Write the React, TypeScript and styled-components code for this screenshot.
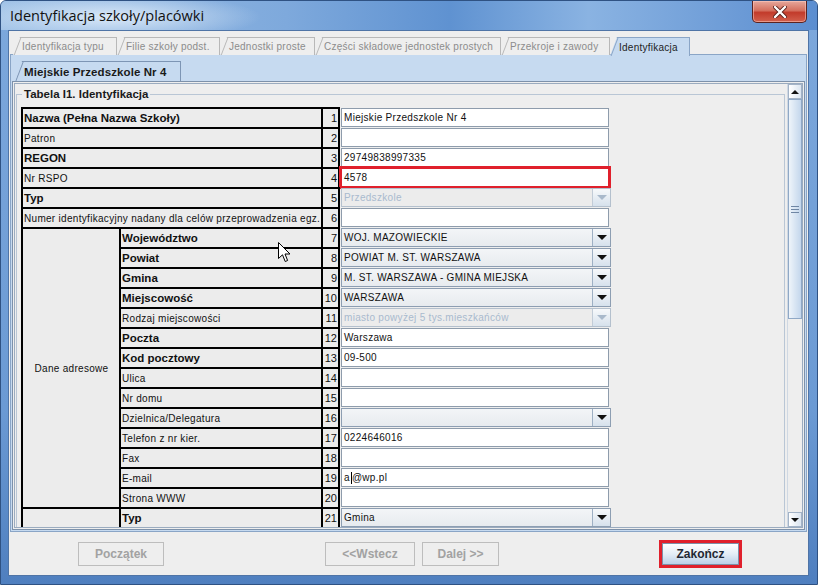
import styled, { createGlobalStyle } from 'styled-components';

const GlobalStyle = createGlobalStyle`
  html, body {
    margin: 0;
    padding: 0;
    background: #ffffff;
  }
  body {
    font-family: "Liberation Sans", Arial, sans-serif;
  }
  * {
    box-sizing: border-box;
  }
`;

const Frame = styled.div`
  width: 818px;
  height: 585px;
  display: flex;
  flex-direction: column;
  background: linear-gradient(180deg, #7da8dc 0%, #6b9ad4 70%, #4f7fbf 100%);
  border: 1px solid #2f5283;
  border-radius: 6px 6px 0 0;
  overflow: hidden;
`;

const TitleBar = styled.div`
  height: 29px;
  flex: none;
  display: flex;
  justify-content: space-between;
  background:
    radial-gradient(ellipse 150px 24px at 110px 16px, rgba(226, 238, 250, 0.9), rgba(226, 238, 250, 0) 100%),
    linear-gradient(90deg, #9dc0e6 0%, #7ea9dc 35%, #5f92d1 55%, #8ab3e2 72%, #5c8ed0 100%);
`;

const Title = styled.div`
  padding: 5px 0 0 9px;
  font-family: "Open Sans", "Noto Sans", sans-serif;
  font-size: 14.5px;
  color: #111;
`;

const CloseButton = styled.div`
  width: 55px;
  height: 22px;
  margin-right: 10px;
  display: flex;
  align-items: center;
  justify-content: center;
  border: 1px solid #5b2320;
  border-top: none;
  border-radius: 0 0 5px 5px;
  background: linear-gradient(180deg, #e6a89c 0%, #d4705f 45%, #c23b2b 55%, #d2604d 100%);
  box-shadow: inset 0 0 0 1px rgba(255, 210, 200, 0.5);
`;

const Client = styled.div`
  flex: 1;
  margin: 0 8px 8px 7px;
  display: flex;
  flex-direction: column;
  padding: 6px 1px 0 1px;
  background: #eeeeee;
  border: 1px solid #4f74a6;
`;

const TabStrip = styled.div`
  position: relative;
  z-index: 1;
  display: flex;
  height: 18px;
  margin: 0 0 -1px 3px;
  align-items: flex-start;
`;

const Tab = styled.div<{ $active?: boolean; $w?: number }>`
  position: relative;
  width: ${(p) => (p.$w ? p.$w + 'px' : 'auto')};
  height: ${(p) => (p.$active ? '19px' : '18px')};
  padding: 0 0 0 9px;
  flex: none;
  display: flex;
  align-items: center;
  font-size: 10px;
  letter-spacing: 0.25px;
  white-space: nowrap;
  color: ${(p) => (p.$active ? '#1e1e1e' : '#8c8c8c')};
  background: ${(p) => (p.$active ? '#c6daf0' : '#eeeeee')};
  border-top: 1px solid ${(p) => (p.$active ? '#8aa5c6' : '#b8b8b8')};
  border-right: 1px solid ${(p) => (p.$active ? '#8aa5c6' : '#b8b8b8')};
  clip-path: polygon(7px 0, 100% 0, 100% 100%, 0 100%);

  &::before {
    content: '';
    position: absolute;
    left: 4px;
    top: 0;
    width: 1px;
    height: 100%;
    background: ${(p) => (p.$active ? '#8aa5c6' : '#b8b8b8')};
    transform: skewX(-21deg);
  }
`;

const Pane = styled.div`
  height: 478px;
  flex: none;
  display: flex;
  flex-direction: column;
  padding: 6px 1px 1px 1px;
  background: #c6daf0;
  border: 1px solid #8aa5c6;
`;

const InnerTab = styled(Tab)`
  height: 20px;
  margin-left: 3px;
  padding: 0 14px 0 9px;
  align-self: flex-start;
  font-size: 11.5px;
  font-weight: bold;
  letter-spacing: 0.1px;
  color: #1a1a1a;
  border-color: #7d95b4;

  &::before {
    background: #7d95b4;
  }
`;

const InnerPanel = styled.div`
  height: 449px;
  flex: none;
  padding: 1px;
  background: #eeeeee;
  border: 1px solid #7d91aa;
`;

const Viewport = styled.div`
  height: 445px;
  display: flex;
  overflow: hidden;
  border: 1px solid #9aabbf;
`;

const Content = styled.div`
  flex: 1;
  overflow: hidden;
`;

const TitledBox = styled.fieldset`
  margin: 3px 2px 0 1px;
  padding: 6px 0 0 4px;
  min-width: 0;
  border: 1px solid #b9c6d5;
  border-bottom: none;

  legend {
    padding: 0 2px;
    margin-left: 1px;
    font-size: 11.5px;
    line-height: 14px;
    font-weight: bold;
    color: #1a1a1a;
  }
`;

const Grid = styled.div`
  position: relative;
  display: grid;
  grid-template-columns: 100px 202px 17px 269px;
  grid-template-rows: repeat(20, 20px) 22px;
`;

const LabelCell = styled.div<{
  $col: string;
  $row?: string;
  $left?: boolean;
  $last?: boolean;
  $bold?: boolean;
  $center?: boolean;
}>`
  grid-column: ${(p) => p.$col};
  grid-row: ${(p) => p.$row || 'auto'};
  display: flex;
  align-items: center;
  justify-content: ${(p) => (p.$center ? 'center' : 'flex-start')};
  padding-left: 1px;
  background: #ececec;
  border-top: 2px solid #000;
  border-right: 2px solid #000;
  border-left: ${(p) => (p.$left ? '2px solid #000' : 'none')};
  border-bottom: ${(p) => (p.$last ? '2px solid #000' : 'none')};
  font-size: ${(p) => (p.$bold ? '11.5px' : '10px')};
  font-weight: ${(p) => (p.$bold ? 'bold' : 'normal')};
  letter-spacing: ${(p) => (p.$bold ? '0' : '0.3px')};
  color: #111;
  white-space: nowrap;
  overflow: hidden;
`;

const NumCell = styled.div<{ $last?: boolean }>`
  grid-column: 3;
  display: flex;
  align-items: center;
  justify-content: flex-end;
  padding-right: 1px;
  background: #ececec;
  border-top: 2px solid #000;
  border-right: 2px solid #000;
  border-bottom: ${(p) => (p.$last ? '2px solid #000' : 'none')};
  font-size: 11px;
  color: #111;
`;

const FieldCell = styled.div`
  grid-column: 4;
  padding: 1px 0 0 1px;
`;

const TextBox = styled.div<{ $highlight?: boolean }>`
  width: 268px;
  height: 19px;
  display: flex;
  align-items: center;
  padding-left: 2px;
  background: #ffffff;
  border: 1px solid #8e9cac;
  font-size: 10px;
  letter-spacing: 0.3px;
  color: #111;
  outline: ${(p) => (p.$highlight ? '3px solid #e0202c' : 'none')};
  outline-offset: -1px;
`;

const Combo = styled.div<{ $disabled?: boolean }>`
  width: 270px;
  height: 19px;
  display: flex;
  background: ${(p) => (p.$disabled ? '#ececec' : 'linear-gradient(180deg, #f3f5f7, #e7ebef)')};
  border: 1px solid ${(p) => (p.$disabled ? '#b4c0cd' : '#8d9eb2')};
  font-size: 10px;
  letter-spacing: 0.3px;
  color: ${(p) => (p.$disabled ? '#a9bace' : '#111')};
`;

const ComboText = styled.div`
  flex: 1;
  display: flex;
  align-items: center;
  padding-left: 2px;
  white-space: nowrap;
  overflow: hidden;
`;

const ComboArrow = styled.div<{ $disabled?: boolean }>`
  width: 18px;
  display: flex;
  align-items: center;
  justify-content: center;
  border-left: 1px solid ${(p) => (p.$disabled ? '#c2ccd7' : '#9eb0c4')};
  background: linear-gradient(180deg, #f7f9fb, #d6e1ec);

  &::after {
    content: '';
    border-left: 5px solid transparent;
    border-right: 5px solid transparent;
    border-top: 5px solid ${(p) => (p.$disabled ? '#a9b9cb' : '#111')};
  }
`;

const Caret = styled.span`
  display: inline-block;
  width: 1px;
  height: 12px;
  margin: 0 0 0 1px;
  background: #000;
`;

const Cursor = styled.svg`
  position: absolute;
  left: 257px;
  top: 135px;
  pointer-events: none;
`;

const ScrollBar = styled.div`
  width: 15px;
  flex: none;
  display: flex;
  flex-direction: column;
  background: #eeeeee;
  border-left: 1px solid #cfd8e3;
`;

const ScrollButton = styled.div<{ $down?: boolean }>`
  height: 15px;
  flex: none;
  display: flex;
  align-items: center;
  justify-content: center;
  background: linear-gradient(90deg, #ffffff, #dbe5f0);
  border: 1px solid #a3b3c7;
  margin-top: ${(p) => (p.$down ? 'auto' : '0')};

  &::after {
    content: '';
    border-left: 4px solid transparent;
    border-right: 4px solid transparent;
    border-top: ${(p) => (p.$down ? '4px solid #111' : 'none')};
    border-bottom: ${(p) => (p.$down ? 'none' : '4px solid #111')};
  }
`;

const Thumb = styled.div`
  height: 220px;
  flex: none;
  display: flex;
  flex-direction: column;
  align-items: center;
  justify-content: center;
  gap: 2px;
  background: linear-gradient(90deg, #eef4fa, #c3d6ec);
  border: 1px solid #8fa8c6;

  span {
    width: 8px;
    height: 1px;
    background: #6f86a4;
  }
`;

const ButtonBar = styled.div`
  flex: 1;
  display: flex;
  align-items: center;
  padding-left: 68px;
`;

const Button = styled.div<{ $disabled?: boolean; $gap?: number; $w: number }>`
  width: ${(p) => p.$w}px;
  height: ${(p) => (p.$disabled ? '24px' : '22px')};
  margin-left: ${(p) => p.$gap || 0}px;
  display: flex;
  align-items: center;
  justify-content: center;
  white-space: nowrap;
  font-size: 12px;
  font-weight: bold;
  color: ${(p) => (p.$disabled ? '#a2a2a2' : '#1f2833')};
  background: ${(p) =>
    p.$disabled ? '#eeeeee' : 'linear-gradient(180deg, #ffffff 0%, #e4edf6 50%, #bcd0e8 100%)'};
  border: 1px solid ${(p) => (p.$disabled ? '#bdbdbd' : '#7d90a8')};
`;

const Highlight = styled.div<{ $gap?: number }>`
  margin-left: ${(p) => p.$gap || 0}px;
  border: 3px solid #e0202c;
`;

type Field =
  | { kind: 'text'; value?: string; highlight?: boolean; caret?: boolean }
  | { kind: 'combo'; value?: string; disabled?: boolean };

type Row = { label?: string; bold?: boolean; field: Field };

const topRows: Row[] = [
  { label: 'Nazwa (Pełna Nazwa Szkoły)', bold: true, field: { kind: 'text', value: 'Miejskie Przedszkole Nr 4' } },
  { label: 'Patron', field: { kind: 'text' } },
  { label: 'REGON', bold: true, field: { kind: 'text', value: '29749838997335' } },
  { label: 'Nr RSPO', field: { kind: 'text', value: '4578', highlight: true } },
  { label: 'Typ', bold: true, field: { kind: 'combo', value: 'Przedszkole', disabled: true } },
  { label: 'Numer identyfikacyjny nadany dla celów przeprowadzenia egz.', field: { kind: 'text' } },
];

const addressRows: Row[] = [
  { label: 'Województwo', bold: true, field: { kind: 'combo', value: 'WOJ. MAZOWIECKIE' } },
  { label: 'Powiat', bold: true, field: { kind: 'combo', value: 'POWIAT M. ST. WARSZAWA' } },
  { label: 'Gmina', bold: true, field: { kind: 'combo', value: 'M. ST. WARSZAWA - GMINA MIEJSKA' } },
  { label: 'Miejscowość', bold: true, field: { kind: 'combo', value: 'WARSZAWA' } },
  { label: 'Rodzaj miejscowości', field: { kind: 'combo', value: 'miasto powyżej 5 tys.mieszkańców', disabled: true } },
  { label: 'Poczta', bold: true, field: { kind: 'text', value: 'Warszawa' } },
  { label: 'Kod pocztowy', bold: true, field: { kind: 'text', value: '09-500' } },
  { label: 'Ulica', field: { kind: 'text' } },
  { label: 'Nr domu', field: { kind: 'text' } },
  { label: 'Dzielnica/Delegatura', field: { kind: 'combo' } },
  { label: 'Telefon z nr kier.', field: { kind: 'text', value: '0224646016' } },
  { label: 'Fax', field: { kind: 'text' } },
  { label: 'E-mail', field: { kind: 'text', value: 'a@wp.pl', caret: true } },
  { label: 'Strona WWW', field: { kind: 'text' } },
];

const tabs = [
  { title: 'Identyfikacja typu', w: 104 },
  { title: 'Filie szkoły podst.', w: 103 },
  { title: 'Jednostki proste', w: 95 },
  { title: 'Części składowe jednostek prostych', w: 186 },
  { title: 'Przekroje i zawody', w: 109 },
  { title: 'Identyfikacja', w: 80 },
];

const FieldView = ({ field }: { field: Field }) => {
  if (field.kind === 'combo') {
    return (
      <Combo $disabled={field.disabled}>
        <ComboText>{field.value}</ComboText>
        <ComboArrow $disabled={field.disabled} />
      </Combo>
    );
  }
  if (field.caret && field.value) {
    return (
      <TextBox>
        {field.value.slice(0, 1)}
        <Caret />
        {field.value.slice(1)}
      </TextBox>
    );
  }
  return <TextBox $highlight={field.highlight}>{field.value}</TextBox>;
};

const App = () => {
  return (
    <>
      <GlobalStyle />
      <Frame>
        <TitleBar>
          <Title>Identyfikacja szkoły/placówki</Title>
          <CloseButton>
            <svg width="14" height="12" viewBox="0 0 14 12">
              <path d="M2 1 L12 11 M12 1 L2 11" stroke="#5a1f1a" strokeWidth="4" strokeLinecap="round" />
              <path d="M2 1 L12 11 M12 1 L2 11" stroke="#ffffff" strokeWidth="2.4" strokeLinecap="round" />
            </svg>
          </CloseButton>
        </TitleBar>

        <Client>
          <TabStrip>
            {tabs.map((t, i) => (
              <Tab key={t.title} $w={t.w} $active={i === tabs.length - 1}>
                {t.title}
              </Tab>
            ))}
          </TabStrip>

          <Pane>
            <InnerTab $active>Miejskie Przedszkole Nr 4</InnerTab>
            <InnerPanel>
              <Viewport>
                <Content>
                  <TitledBox>
                    <legend>Tabela I1. Identyfikacja</legend>
                    <Grid>
                      {topRows.map((r, i) => (
                        <>
                          <LabelCell key={'l' + i} $col="1 / 3" $left $bold={r.bold}>
                            {r.label}
                          </LabelCell>
                          <NumCell key={'n' + i}>{i + 1}</NumCell>
                          <FieldCell key={'f' + i}>
                            <FieldView field={r.field} />
                          </FieldCell>
                        </>
                      ))}

                      <LabelCell $col="1" $row="7 / 21" $left $center>
                        Dane adresowe
                      </LabelCell>
                      {addressRows.map((r, i) => (
                        <>
                          <LabelCell key={'al' + i} $col="2" $row={String(i + 7)} $bold={r.bold}>
                            {r.label}
                          </LabelCell>
                          <NumCell key={'an' + i} style={{ gridRow: i + 7 }}>
                            {i + 7}
                          </NumCell>
                          <FieldCell key={'af' + i} style={{ gridRow: i + 7 }}>
                            <FieldView field={r.field} />
                          </FieldCell>
                        </>
                      ))}

                      <LabelCell $col="1" $row="21" $left $last />
                      <LabelCell $col="2" $row="21" $last $bold>
                        Typ
                      </LabelCell>
                      <NumCell $last style={{ gridRow: 21 }}>
                        21
                      </NumCell>
                      <FieldCell style={{ gridRow: 21 }}>
                        <FieldView field={{ kind: 'combo', value: 'Gmina' }} />
                      </FieldCell>

                      <Cursor width="13" height="21" viewBox="0 0 13 21">
                        <path
                          d="M0.5 0.5 L0.5 16.5 L4.5 12.8 L7.2 19.5 L9.6 18.5 L7 12 L12 12 Z"
                          fill="#ffffff"
                          stroke="#000000"
                          strokeWidth="1"
                          strokeLinejoin="round"
                        />
                      </Cursor>
                    </Grid>
                  </TitledBox>
                </Content>
                <ScrollBar>
                  <ScrollButton />
                  <Thumb>
                    <span />
                    <span />
                    <span />
                  </Thumb>
                  <ScrollButton $down />
                </ScrollBar>
              </Viewport>
            </InnerPanel>
          </Pane>

          <ButtonBar>
            <Button $disabled $w={86}>
              Początek
            </Button>
            <Button $disabled $gap={161} $w={90}>
              &lt;&lt;Wstecz
            </Button>
            <Button $disabled $gap={7} $w={77}>
              Dalej &gt;&gt;
            </Button>
            <Highlight $gap={160}>
              <Button $w={77}>Zakończ</Button>
            </Highlight>
          </ButtonBar>
        </Client>
      </Frame>
    </>
  );
};

export default App;
